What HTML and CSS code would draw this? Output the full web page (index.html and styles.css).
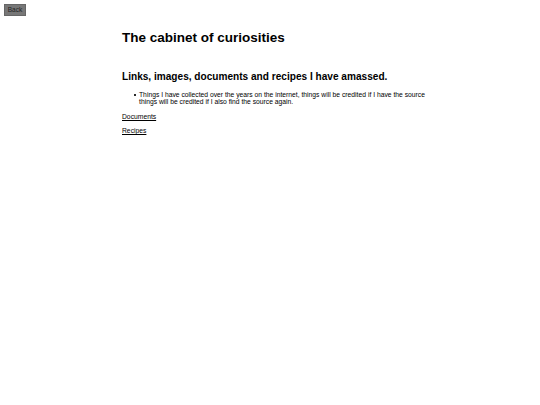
FILE: index.html
```html
<!DOCTYPE html>
<html>
<head>
<meta charset="utf-8">
<link rel="stylesheet" href="styles.css">
</head>
<body>
<div class="topbar"><button class="back">Back</button></div>
<main class="content">
<h1 class="title">The cabinet of curiosities</h1>
<h2 class="subtitle">Links, images, documents and recipes I have amassed.</h2>
<ul class="list">
<li class="item">Things I have collected over the years on the internet, things will be credited if I have the source things will be credited if I also find the source again.</li>
</ul>
<p class="link-row"><a href="#">Documents</a></p>
<p class="link-row"><a href="#">Recipes</a></p>
</main>
</body>
</html>
```
FILE: styles.css
```css
html, body {
  margin: 0;
  padding: 0;
  background: #fff;
}
body {
  font-family: "Liberation Sans", Arial, sans-serif;
  font-size: 6.75px;
  color: #000;
}
.topbar {
  padding: 4px 0 0 4px;
  height: 12px;
}
.back {
  display: block;
  width: 22px;
  height: 12px;
  padding: 0;
  margin: 0;
  background: #777;
  border: 1px solid #666;
  color: #222;
  font-family: "Liberation Sans", Arial, sans-serif;
  font-size: 6.5px;
  line-height: 10px;
}
.content {
  width: 306px;
  margin: 0 auto;
  padding-left: 10px;
}
.title {
  font-size: 13.5px;
  margin: 14px 0 0;
}
.subtitle {
  font-size: 10.1px;
  margin: 26px 0 9px;
}
.list {
  margin: 0 0 8px;
  padding-left: 17px;
  line-height: 7px;
  list-style: none;
}
.item {
  position: relative;
}
.item::before {
  content: "";
  position: absolute;
  left: -5px;
  top: 3px;
  width: 1.6px;
  height: 1.6px;
  border-radius: 50%;
  background: #000;
}
.link-row {
  margin: 7px 0;
  line-height: 7px;
}
.link-row a {
  color: #000;
}
```
